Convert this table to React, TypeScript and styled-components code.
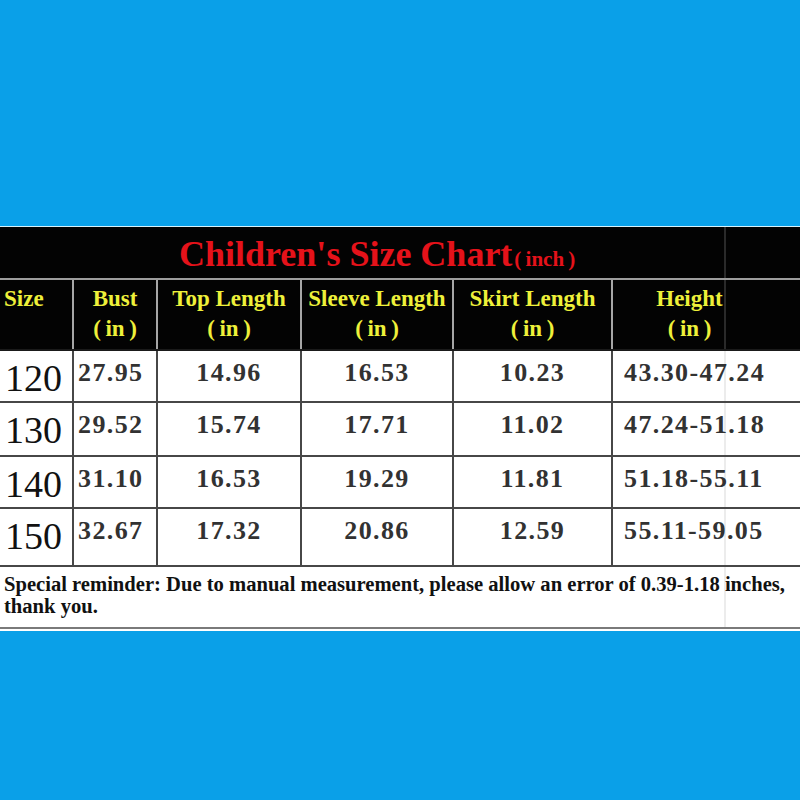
import styled, { createGlobalStyle } from 'styled-components';

const GlobalStyle = createGlobalStyle`
  html, body {
    margin: 0;
    padding: 0;
    background: #0aa0e8;
  }
  body {
    font-family: "Liberation Serif", "Noto Sans CJK SC", serif;
  }
`;

const Page = styled.div`
  width: 800px;
  height: 800px;
  background: #0aa0e8; /* bright blue backdrop */
  display: flex;
  flex-direction: column;
  padding-top: 226px;
  box-sizing: border-box;
`;

const Chart = styled.div`
  width: 800px;
  border-top: 1px solid #d6f1fb;
  border-bottom: 2px solid #ffffff;
`;

/* faint leftover spreadsheet column edge at x=725 */
const ghostLine = (color: string) =>
  `linear-gradient(90deg, transparent 724px, ${color} 724px, ${color} 726px, transparent 726px)`;

const TitleBand = styled.div`
  height: 53px;
  background-color: #030303;
  background-image: ${ghostLine('#2a2a2a')};
  border-bottom: 2px solid #9d9d9d;
  padding: 7px 0 0 179px;
  box-sizing: border-box;
  display: flex;
  align-items: baseline;
`;

const Title = styled.span`
  color: #e5121a;
  font-size: 36px;
  font-weight: bold;
  line-height: 40px;
`;

const TitleUnit = styled.span`
  color: #e5121a;
  font-size: 21px;
  font-weight: bold;
  margin-left: 2px;
`;

const Row = styled.div<{ $dark?: boolean; $height: number }>`
  display: grid;
  grid-template-columns: 72px 84px 144px 152px 159px 1fr;
  height: ${(p) => p.$height}px;
  box-sizing: border-box;
  background-color: ${(p) => (p.$dark ? '#030303' : '#ffffff')};
  background-image: ${(p) => ghostLine(p.$dark ? '#2a2a2a' : '#ececec')};
  border-bottom: 2px solid ${(p) => (p.$dark ? '#1a1a1a' : '#474747')};
`;

const HeadCell = styled.div<{ $align?: string; $padR?: number }>`
  border-left: 2px solid #a6a6a6;
  &:first-child {
    border-left: none;
  }
  color: #eef03a;
  font-size: 23px;
  font-weight: bold;
  line-height: 30px;
  padding: 4px ${(p) => p.$padR ?? 0}px 0 ${(p) => (p.$align === 'left' ? 4 : 0)}px;
  text-align: ${(p) => p.$align ?? 'center'};
  white-space: nowrap;
`;

const DataCell = styled.div<{ $align?: string; $padL?: number }>`
  border-left: 2px solid #474747;
  &:first-child {
    border-left: none;
  }
  color: #323232;
  font-size: 26px;
  font-weight: bold;
  letter-spacing: 1.4px;
  line-height: 30px;
  padding: 7px 0 0 ${(p) => p.$padL ?? 0}px;
  text-align: ${(p) => p.$align ?? 'center'};
  white-space: nowrap;
`;

const SizeCell = styled.div`
  color: #111;
  font-size: 38px;
  font-weight: normal;
  line-height: 40px;
  padding: 7px 0 0 5px;
  white-space: nowrap;
`;

const Note = styled.div`
  background-color: #ffffff;
  background-image: ${ghostLine('#ececec')};
  border-bottom: 2px solid #7a7a7a;
  color: #111;
  font-size: 20.6px;
  font-weight: bold;
  line-height: 22px;
  padding: 6px 4px 10px 4px;
`;

type SizeRow = {
  size: string;
  bust: string;
  top: string;
  sleeve: string;
  skirt: string;
  height: string;
};

const rows: SizeRow[] = [
  { size: '120', bust: '27.95', top: '14.96', sleeve: '16.53', skirt: '10.23', height: '43.30-47.24' },
  { size: '130', bust: '29.52', top: '15.74', sleeve: '17.71', skirt: '11.02', height: '47.24-51.18' },
  { size: '140', bust: '31.10', top: '16.53', sleeve: '19.29', skirt: '11.81', height: '51.18-55.11' },
  { size: '150', bust: '32.67', top: '17.32', sleeve: '20.86', skirt: '12.59', height: '55.11-59.05' },
];

const rowHeights = [52, 54, 52, 58];

const unit = '(\u2009in\u2009)';

const App = () => {
  return (
    <>
      <GlobalStyle />
      <Page>
        <Chart>
          <TitleBand>
            <Title>Children's Size Chart</Title>
            <TitleUnit>{'(\u2009inch\u2009)'}</TitleUnit>
          </TitleBand>

          <Row $dark $height={71}>
            <HeadCell $align="left">Size</HeadCell>
            <HeadCell>
              Bust
              <br />
              {unit}
            </HeadCell>
            <HeadCell>
              Top Length
              <br />
              {unit}
            </HeadCell>
            <HeadCell>
              Sleeve Length
              <br />
              {unit}
            </HeadCell>
            <HeadCell>
              Skirt Length
              <br />
              {unit}
            </HeadCell>
            <HeadCell $padR={34}>
              Height
              <br />
              {unit}
            </HeadCell>
          </Row>

          {rows.map((r, i) => (
            <Row key={r.size} $height={rowHeights[i]}>
              <SizeCell>{r.size}</SizeCell>
              <DataCell $align="left" $padL={4}>
                {r.bust}
              </DataCell>
              <DataCell>{r.top}</DataCell>
              <DataCell>{r.sleeve}</DataCell>
              <DataCell>{r.skirt}</DataCell>
              <DataCell $align="left" $padL={11}>
                {r.height}
              </DataCell>
            </Row>
          ))}

          <Note>
            Special reminder: Due to manual measurement, please allow an error of 0.39-1.18 inches, thank you.
          </Note>
        </Chart>
      </Page>
    </>
  );
};

export default App;
